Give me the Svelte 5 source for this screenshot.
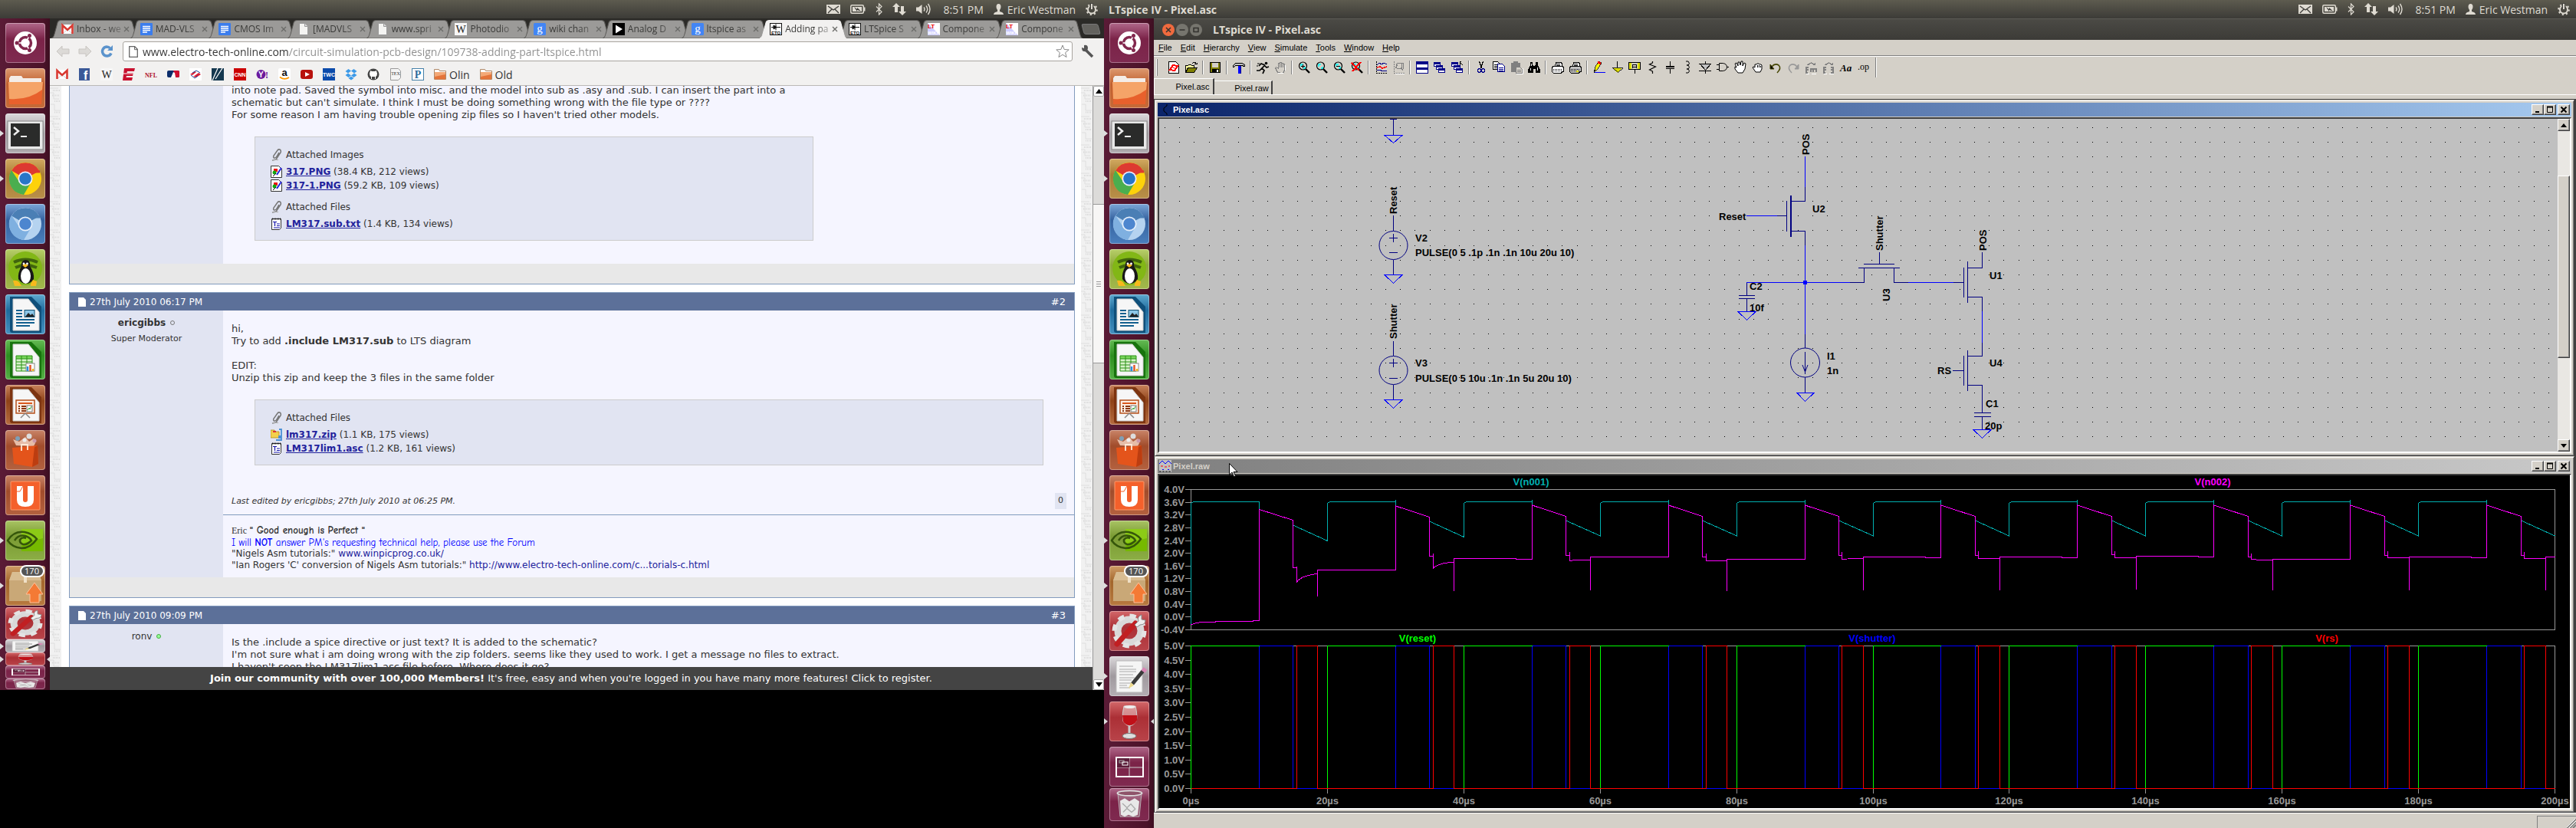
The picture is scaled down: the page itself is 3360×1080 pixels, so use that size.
<script lang="ts">
  const browserTabs = [
    { icon: 'gmail', title: 'Inbox - we' },
    { icon: 'gdoc', title: 'MAD-VLS' },
    { icon: 'gdoc', title: 'CMOS Im' },
    { icon: 'page', title: '[MADVLS' },
    { icon: 'page', title: 'www.spri' },
    { icon: 'wiki', title: 'Photodio' },
    { icon: 'google', title: 'wiki chan' },
    { icon: 'play', title: 'Analog D' },
    { icon: 'google', title: 'ltspice as' },
    { icon: 'eto', title: 'Adding pa', active: true },
    { icon: 'eto', title: 'LTSpice S' },
    { icon: 'ltwiki', title: 'Compone' },
    { icon: 'ltwiki', title: 'Compone' }
  ];

  const bookmarks = [
    ['gmail', 'Gmail'], ['facebook', 'Facebook'], ['wiki', 'Wikipedia'], ['espn', 'ESPN'], ['nfl', 'NFL'],
    ['mlb', 'MLB'], ['bank', 'Bank'], ['delta', 'Flights'], ['cnn', 'CNN'], ['yahoo', 'Yahoo'],
    ['amazon', 'Amazon'], ['youtube', 'YouTube'], ['twc', 'Weather'], ['dropbox', 'Dropbox'],
    ['github', 'GitHub'], ['tex', 'TeX'], ['pandora', 'Pandora']
  ];

  type Item = { icon: string; tone: string; pip?: string; badge?: string; fold?: string; back?: boolean };
  const common: Item[] = [
    { icon: 'ubuntu', tone: 'plum' },
    { icon: 'files', tone: 'orange' },
    { icon: 'terminal', tone: 'silver', pip: 'open' },
    { icon: 'chrome', tone: 'gold', pip: 'solid' },
    { icon: 'chromium', tone: 'blue' },
    { icon: 'tux', tone: 'lime' },
    { icon: 'writer', tone: 'azure' },
    { icon: 'calc', tone: 'green' },
    { icon: 'impress', tone: 'brown' },
    { icon: 'bag', tone: 'rust' },
    { icon: 'one', tone: 'rust' },
    { icon: 'nvidia', tone: 'moss', pip: 'open' },
    { icon: 'package', tone: 'tan', pip: 'solid', badge: '170' }
  ];
  const leftItems: Item[] = [
    ...common,
    { icon: 'settings', tone: 'red', fold: 'f1' },
    { icon: 'editor', tone: 'silver', fold: 'f2', pip: 'open' },
    { icon: 'wine', tone: 'red', fold: 'f2', pip: 'open', back: true },
    { icon: 'workspace', tone: 'plum', fold: 'f2' },
    { icon: 'trash', tone: 'plum', fold: 'f3' }
  ];
  const rightItems: Item[] = [
    ...common,
    { icon: 'settings', tone: 'red' },
    { icon: 'editor', tone: 'silver', pip: 'solid' },
    { icon: 'wine', tone: 'red', pip: 'solid', back: true },
    { icon: 'workspace', tone: 'plum', fold: 'f0' },
    { icon: 'trash', tone: 'plum', fold: 'f4' }
  ];

  const menus = ['File', 'Edit', 'Hierarchy', 'View', 'Simulate', 'Tools', 'Window', 'Help'];
  const toolGroups = [
    ['new', 'open'], ['save'], ['hammer'], ['run', 'halt'],
    ['zoomin', 'pan', 'zoomout', 'zoomfit'], ['autorange', 'pick'],
    ['tile', 'cascade', 'closeall'], ['cut', 'copy', 'paste', 'find'], ['setup', 'print'],
    ['wire', 'ground', 'label', 'resistor', 'cap', 'inductor', 'diode', 'gate', 'move', 'drag',
      'undo', 'redo', 'rotate', 'mirror', 'text', 'op']
  ];

  let gridDots = '';
  for (let r = 0; r < 22; r++)
    for (let c = 0; c < 95; c++)
      gridDots += `M${Math.round(1519 + c * 19.2)} ${Math.round(166 + r * 19.2)}h1v1h-1z`;

  const X0 = 1553.5;
  const tx = (t: number) => Math.round(X0 + t * 8.895 - 0.5) + 0.5;
  const cycles = [
    [664.5, 678.5, 740.5, 739, 759, 748.5, 778, 743.5, 743.5],
    [660, 674.5, 725.5, 722, 741, 733, 771, 728.5, 729.5],
    [659, 673.5, 724.5, 720, 731.5, 730, 770, 726.5, 726.5],
    [659, 673.5, 726.5, 722, 731.5, 731.5, 771, 729.5, 729.5],
    [659, 673.5, 724.5, 720, 729.5, 728.5, 770, 726.5, 727.5],
    [659, 673.5, 724.5, 719, 728.5, 728.5, 770, 726.5, 727.5],
    [659, 673.5, 723.5, 719, 727.5, 727.5, 769, 725.5, 726.5],
    [659, 673.5, 726.5, 722, 729.5, 730.5, 770, 729.5, 729.5],
    [659, 673.5, 724.5, 719, 727.5, 727.5, 770, 726.5, 727.5],
    [659, 673.5, 724.5, 720, 728.5, 728.5, 770, 726.5, 726.5]
  ];
  let n002 = `M${X0} 815L1557 813.5L1566 811.5H1585V810.5H1634V809.5H${tx(10)}`;
  let n001 = `M${X0} 815`;
  let reset = `M${X0} 1028.5`;
  let shutter = `M${X0} 1028.5`;
  let rs = `M${X0} 1028.5`;
  cycles.forEach((c, p) => {
    const t = 20 * p;
    const [top, end, drop, spike, low, tail, dip, f1, f2] = c;
    n002 += `V${top}L${tx(t + 15)} ${end}V${drop}H${tx(t + 15.5)}V${spike}V${low}Q${tx(t + 16.2)} ${tail + (low - tail) * 0.2} ${tx(t + 18.6)} ${tail}V${dip}V${f1}`;
    n002 += p < 9 ? `H${tx(t + 27.7)}V${f2}H${tx(t + 30)}` : `H${tx(200)}`;
    n001 += `V656.5L${tx(t) + 3} 654.5H${tx(t + 10)}${p ? 'V652' : ''}V${top}L${tx(t + 15)} ${end}V${p ? (p === 1 ? 680 : 679) : 685}L${tx(t + 20)} ${p ? (p === 1 ? 700.5 : 699) : 705.5}`;
    reset += `V842.5H${tx(t + 10)}V1028.5H${tx(t + 20)}`;
    shutter += `H${tx(t + 10)}V842.5H${tx(t + 15)}V1028.5`;
    rs += `H${tx(t + 15.5)}V842.5H${tx(t + 18.6)}V1028.5`;
  });
  shutter += `H${tx(200)}`;
  rs += `H${tx(200)}`;

  const upperTicks = Array.from({ length: 12 }, (_, i) => ({ y: 638.5 + Math.round(i * 16.64), label: (4 - i * 0.4).toFixed(1) + 'V' }));
  const lowerTicks = Array.from({ length: 11 }, (_, i) => ({ y: 842.5 + Math.round(i * 18.6), label: (5 - i * 0.5).toFixed(1) + 'V' }));
  const timeTicks = Array.from({ length: 11 }, (_, i) => ({ x: tx(i * 20), label: i * 20 + 'µs' }));
</script>

{#snippet favicon(kind: string)}
  <svg class="fav" viewBox="0 0 16 16" aria-hidden="true">
    {#if kind === 'gmail'}
      <rect y="2" width="16" height="12" fill="#fff" /><path d="M1.500 14V3l6.500 6 6.500-6v11" fill="none" stroke="#d93a32" stroke-width="2.600" /><path d="M3 13l4-4M13 13L9 9" stroke="#ccc" />
    {:else if kind === 'gdoc'}
      <rect width="16" height="16" rx="1" fill="#3b7ded" /><path d="M3 4.500h10M3 7h10M3 9.500h10M3 12h6" stroke="#fff" stroke-width="1.300" />
    {:else if kind === 'page'}
      <path d="M2.500.5h7l4 4v11h-11z" fill="#f4f4f2" stroke="#999" /><path d="M9.500.5v4h4" fill="#ddd" stroke="#999" />
    {:else if kind === 'wiki'}
      <rect width="16" height="16" fill="#f6f6f6" /><text x="8" y="13" class="serif" font-size="14" text-anchor="middle" fill="#222">W</text>
    {:else if kind === 'google'}
      <rect width="16" height="16" rx="1.500" fill="#4285f4" /><text x="8" y="12" class="serif" font-size="15" text-anchor="middle" fill="#fff">g</text>
    {:else if kind === 'play'}
      <rect width="16" height="16" fill="#000" /><path d="M4 2.500L13 8l-9 5.500z" fill="#fff" />
    {:else if kind === 'eto'}
      <rect x=".5" y=".5" width="15" height="15" fill="#fff" stroke="#111" /><path d="M2 5.500h12M8 1.500v8M5 3v5l4-2.500z" stroke="#111" fill="#111" /><text x="8" y="14.500" class="sans" font-size="6" font-weight="700" text-anchor="middle" fill="#111">ETO</text>
    {:else if kind === 'ltwiki'}
      <rect width="16" height="16" fill="#fff" /><path d="M0 0l16 16H0z" fill="#ccf" /><text x="0" y="7" class="sans" font-size="8" font-weight="700" fill="#e00">LT</text><text x="0" y="15" class="sans" font-size="6" font-weight="700" fill="#fff">WIKI</text>
    {:else if kind === 'facebook'}
      <rect x="1" width="14" height="16" fill="#3b5998" /><text x="7" y="15" class="sans" font-size="16" font-weight="700" fill="#fff">f</text>
    {:else if kind === 'espn'}
      <path d="M2 0h14l-1 4H6l-.500 2H14l-1 4H5l-.500 2H13l-1 4H0z" fill="#c8102e" /><path d="M1 7h13" stroke="#fff" stroke-width="1" />
    {:else if kind === 'nfl'}
      <text x="8" y="12" class="serif" font-size="8" font-weight="700" text-anchor="middle" fill="#b0122b">NFL</text>
    {:else if kind === 'mlb'}
      <rect y="3" width="16" height="9" rx="2" fill="#0b2d6b" /><path d="M8 3h6a2 2 0 012 2v5a2 2 0 01-2 2h-3z" fill="#cf1030" /><path d="M5 12l3-7 2 1 1 6z" fill="#fff" />
    {:else if kind === 'bank'}
      <rect width="16" height="16" fill="#fff" /><path d="M1 8l6-4 2 1-5 4zM5 11l7-5 3 2-6 4z" fill="#d71f36" /><path d="M4 6l5-3 5 3M2 9l5 4 4-3" stroke="#1f4ba0" fill="none" />
    {:else if kind === 'delta'}
      <rect width="16" height="16" fill="#15384f" /><path d="M8 0l-7 16M14 0L5 14" stroke="#fff" stroke-width="1.200" />
    {:else if kind === 'cnn'}
      <rect width="16" height="16" fill="#c00" /><text x="8" y="11" class="sans" font-size="7" font-weight="700" text-anchor="middle" fill="#fff">CNN</text>
    {:else if kind === 'yahoo'}
      <circle cx="6.500" cy="8" r="6" fill="#6b1a9e" /><text x="3" y="12" class="sans" font-size="10" font-weight="700" fill="#fff">Y</text><text x="12" y="13" class="serif" font-size="12" font-weight="700" fill="#6b1a9e">!</text>
    {:else if kind === 'amazon'}
      <rect width="16" height="16" rx="2" fill="#fff" /><text x="8" y="10" class="sans" font-size="13" font-weight="700" text-anchor="middle" fill="#111">a</text><path d="M2 11.500q6 4.500 12 .5" stroke="#f90" stroke-width="1.800" fill="none" />
    {:else if kind === 'youtube'}
      <rect y="2" width="16" height="12" rx="3" fill="#b8120d" /><path d="M6 5l6 3-6 3z" fill="#fff" />
    {:else if kind === 'twc'}
      <rect width="16" height="16" fill="#0b4bab" /><text x="8" y="11" class="sans" font-size="7" font-weight="700" text-anchor="middle" fill="#fff">TWC</text>
    {:else if kind === 'dropbox'}
      <path d="M4.500 1L8 3.500 4 6.500.5 4zM11.500 1L8 3.500l4 3L15.500 4zM.5 9L4 6.500l4 3L4.500 12zM15.500 9L12 6.500l-4 3 3.500 2.500zM8 10.500l3.500 2.500L8 15.500 4.500 13z" fill="#3d9ae8" />
    {:else if kind === 'github'}
      <circle cx="8" cy="8" r="7.500" fill="#444" /><path d="M5 14v-3q-2-1-2-4 0-1 .7-2L4 3l2 1h4l2-1 .3 2q.7 1 .7 2 0 3-2 4v3z" fill="#fff" /><path d="M6 14v-3h4v3z" fill="#444" />
    {:else if kind === 'tex'}
      <path d="M1.500.5h10l3 3v9l-3 3h-10z" fill="#f5f5f5" stroke="#999" /><text x="8" y="9" class="serif" font-size="6" text-anchor="middle" fill="#333">TEX</text>
    {:else if kind === 'pandora'}
      <rect x=".5" y=".5" width="15" height="15" fill="#fff" stroke="#4580a8" /><text x="8" y="13" class="serif" font-size="14" font-weight="700" text-anchor="middle" fill="#2d6c9c">P</text>
    {:else if kind === 'folder'}
      <path d="M.5 1.500h6l1 2h8v11H.5z" fill="#fff" stroke="#b08a6a" /><rect x="1" y="5" width="14" height="9.500" fill="#e4743a" /><path d="M1 5h14v3L1 11z" fill="#f3a876" />
    {/if}
  </svg>
{/snippet}

{#snippet glyph(kind: string)}
  <svg class="glyph" viewBox="0 0 52 52" preserveAspectRatio="none" aria-hidden="true">
    {#if kind === 'ubuntu'}
      <circle cx="26" cy="26" r="15" fill="#fff" /><circle cx="26" cy="26" r="7.500" fill="none" stroke="#82284e" stroke-width="3.500" />
      <path d="M26 26L12 26M26 26L33 14M26 26L33 38" stroke="#fff" stroke-width="1.600" />
      <circle cx="15" cy="26" r="2.500" fill="#82284e" /><circle cx="31.500" cy="16.500" r="2.500" fill="#82284e" /><circle cx="31.500" cy="35.500" r="2.500" fill="#82284e" />
    {:else if kind === 'files'}
      <path d="M5 13l2-3h14l2 3h24v6H5z" fill="#f4ede8" /><path d="M4 18h45l-2 29H5z" fill="#e8602c" /><path d="M4 18h45l-1 10Q30 42 5 40z" fill="#f5a468" />
    {:else if kind === 'terminal'}
      <rect x="3" y="10" width="46" height="37" fill="#e8e8e8" stroke="#888" /><rect x="7" y="13" width="38" height="30" fill="#2a2b2a" /><path d="M11 18l6 5-6 5" fill="none" stroke="#eee" stroke-width="2.500" /><path d="M20 30h8" stroke="#eee" stroke-width="2" />
    {:else if kind === 'chrome'}
      <circle cx="26" cy="26" r="21" fill="#fdd20a" /><path d="M26 26L8 15.500A21 21 0 0144.500 16z" fill="#dd3a31" /><path d="M8 15A21 21 0 0024 47L34 30 18 30z" fill="#4bae4f" /><path d="M26 17h19" stroke="#dd3a31" stroke-width="3" /><circle cx="26" cy="26" r="9.500" fill="#eef" /><circle cx="26" cy="26" r="7.800" fill="#2876c8" />
    {:else if kind === 'chromium'}
      <circle cx="26" cy="26" r="21" fill="#b5d3f0" /><path d="M26 26L8 15.500A21 21 0 0144.500 16z" fill="#4a7fb5" /><path d="M8 15A21 21 0 0024 47L34 30 18 30z" fill="#7fb0e0" /><path d="M26 17h19" stroke="#4a7fb5" stroke-width="3" /><circle cx="26" cy="26" r="9.500" fill="#e6f0fb" /><circle cx="26" cy="26" r="7.800" fill="#4d86cf" />
    {:else if kind === 'tux'}
      <circle cx="26" cy="25" r="22" fill="#82b716" /><path d="M11 17q15-7 31 0M13 24q13-6 28 0" stroke="#40640d" stroke-width="4" fill="none" /><path d="M21 22q-1-7 5-8 7 0 6 8 6 9 5 17-4 6-10 6t-10-6q-1-8 4-17z" fill="#181818" /><ellipse cx="26.500" cy="35" rx="6.500" ry="10" fill="#fff" /><path d="M22 21l4-2 4 2-4 3zM10 41q5-1 8 2l3 5-9 0zM33 45l3-5 5 2-1 6h-7z" fill="#f7b91c" /><circle cx="24" cy="19" r="1.400" fill="#fff" /><circle cx="28.500" cy="19" r="1.400" fill="#fff" />
    {:else if kind === 'writer' || kind === 'calc' || kind === 'impress'}
      <path class="doc-{kind}" d="M6 3h28l13 13v34H9q-3 0-3-3z" /><path d="M10 6h20l14 17v24H10z" fill="#f6f6f6" stroke="#ccc" />
      {#if kind === 'writer'}
        <path d="M14 21h8M14 25h8M14 29h8M14 33h24M14 37h24M14 41h18" stroke="#14608f" stroke-width="1.800" /><rect x="25" y="20.500" width="13" height="9" fill="#8cc7e8" stroke="#14506f" /><path d="M26 29l4-5 3 3 2-2 3 4z" fill="#222" />
      {:else if kind === 'calc'}
        <rect x="14" y="21" width="21" height="20" fill="#d6f3c8" /><rect x="14" y="21" width="21" height="4" fill="#7ad55b" /><path d="M14 21h21v20H14zM14 25h21M14 29h21M14 33h21M14 37h21M21 21v20M28 21v20" fill="none" stroke="#2a9116" /><rect x="27" y="31" width="11" height="10" fill="#fff" stroke="#888" /><path d="M29 35v6" stroke="#2d8edb" stroke-width="2.500" /><path d="M32.500 33v8" stroke="#e2572b" stroke-width="2.500" /><path d="M36 38v3" stroke="#f2b61c" stroke-width="2.500" />
      {:else}
        <rect x="14" y="20" width="24" height="17" fill="#fdeee4" stroke="#b4501c" stroke-width="1.500" /><path d="M17 24h18" stroke="#d9581e" stroke-width="2" /><path d="M17 28h2M17 31h2M17 34h2M21 28h6M21 31h6M21 34h6" stroke="#8a3510" stroke-width="2" /><rect x="28" y="27" width="7" height="8" fill="#fff" stroke="#777" /><path d="M29 33l2-3 1 2 2-4" stroke="#37a537" fill="none" /><path d="M26 37l-6 6M26 37l6 6" stroke="#888" stroke-width="1.500" />
      {/if}
    {:else if kind === 'bag'}
      <path d="M14 20L10 12l8 3 8-6 5 6 6-4 2 6-2 4z" fill="#f5d7c5" opacity=".8" /><circle cx="16" cy="11" r="3" fill="#7f9fb5" /><circle cx="31" cy="8" r="3.500" fill="#ddd" /><circle cx="38" cy="14" r="2.500" fill="#c9a" /><circle cx="25" cy="13" r="2.500" fill="#eee" /><path d="M9 23l33-3 1 24-8 4-24-4z" fill="#e4541b" /><path d="M35 48l8-4-1-24-4 2z" fill="#bc3d10" /><path d="M21 27v-8h8v7" stroke="#ffe9d8" stroke-width="1.800" fill="none" />
    {:else if kind === 'one'}
      <rect x="7" y="8" width="38" height="37" rx="1" fill="#f4602b" stroke="#ff9a6a" /><path d="M15 14h8v18q0 3 3 3t3-3V14h8v18q0 9-11 9T15 32z" fill="#fff" /><path d="M23 14l-4 7h-4" fill="none" stroke="#f4602b" />
    {:else if kind === 'nvidia'}
      <path d="M21 11h28v29H21z" fill="#76b900" /><path d="M21 11h28v12L21 30z" fill="#95d320" opacity=".7" /><path d="M3 26q8-13 22-11 10 2 16 9-8 12-20 12Q9 35 3 26z" fill="none" stroke="#35560a" stroke-width="2.500" /><path d="M12 26q5-8 14-6 6 2 8 6-6 6-11 5-5-2-4-6 3-4 8-2" fill="none" stroke="#35560a" stroke-width="2.500" />
    {:else if kind === 'package'}
      <path d="M5 19l4-11h34l4 11v27H5z" fill="#c9a877" /><path d="M5 19l4-11h34l4 11z" fill="#d9bd92" /><path d="M26 8v14" stroke="#efe0c6" stroke-width="4" /><path d="M38 22l11 15h-5v11H32V37h-5z" fill="#f47a35" stroke="#ffc09a" />
    {:else if kind === 'settings'}
      <circle cx="26" cy="26" r="15" fill="none" stroke="#d9d9d9" stroke-width="9" /><circle cx="26" cy="26" r="19.500" fill="none" stroke="#e4e4e4" stroke-width="6" stroke-dasharray="8 7.300" /><path d="M10 43L34 16" stroke="#c11f22" stroke-width="7" stroke-linecap="round" /><path d="M33 18l5-5q-2-6 4-8l0 6 5 1q0 6-7 6l-4 3z" fill="#eee" stroke="#888" />
    {:else if kind === 'editor'}
      <path d="M9 6h34v41H9z" fill="#f5f5f5" stroke="#bbb" /><path d="M13 13h18M13 17h22M13 20h22M13 24h18M13 28h20M13 31h16M13 35h15M13 38h10M13 41h14" stroke="#aaa" /><path d="M44 19L30 36" stroke="#3a3a3a" stroke-width="5" /><path d="M47 16l-3 4" stroke="#d987b6" stroke-width="6" /><path d="M28 34l4 4-7 4z" fill="#ecd98b" />
    {:else if kind === 'wine'}
      <path d="M19 6h15q3 12 1 20-4 6-8.500 6T18 26Q16 16 19 6z" fill="#f3dede" fill-opacity=".5" stroke="#ccc" /><path d="M17 18h19v7q-4 6-9.500 6T18 26z" fill="#c01018" /><path d="M26 32v11" stroke="#ccc" stroke-width="3" /><ellipse cx="26" cy="45" rx="9" ry="3.500" fill="#ddd" stroke="#777" /><ellipse cx="26.500" cy="7" rx="7.500" ry="2" fill="#eee" />
    {:else if kind === 'workspace'}
      <rect x="9" y="14" width="35" height="25" fill="none" stroke="#fff" stroke-width="2" /><path d="M26 15v23M10 27h33" stroke="#ccc" /><rect x="10" y="15" width="16" height="12" fill="#5b1c39" /><rect x="13" y="18" width="6" height="3" fill="none" stroke="#aaa" /><rect x="17" y="20" width="7" height="4" fill="none" stroke="#fff" />
    {:else if kind === 'trash'}
      <path d="M11 8h31l-3 37H14z" fill="#c9b5be" fill-opacity=".35" stroke="#bbb" /><path d="M14 20l6-4 6 5 7-5 6 5-2 21-6 3-6-3-5 3-5-3z" fill="#e8e8e8" /><path d="M17 24l6 7 5-6 6 8M18 38l5-6 6 6 5-5" stroke="#a9a9a9" stroke-width="1.500" fill="none" /><ellipse cx="26.500" cy="8" rx="16" ry="4" fill="#8e5369" stroke="#ddd" stroke-width="2" />
    {/if}
  </svg>
{/snippet}

{#snippet launcher(items: Item[])}
  <nav class="launcher" aria-label="Launcher">
    {#each items as it}
      <button class="app {it.tone} {it.fold ?? ''}" aria-label={it.icon}>
        {@render glyph(it.icon)}
        {#if it.pip}<span class="pip {it.pip}"></span>{/if}
        {#if it.back}<span class="pip-back"></span>{/if}
        {#if it.badge}<span class="badge">{it.badge}</span>{/if}
      </button>
    {/each}
  </nav>
{/snippet}

{#snippet tray()}
  <div class="tray">
    <svg width="18" height="14" viewBox="0 0 18 14" aria-hidden="true"><rect y="1" width="18" height="12" fill="#dfdbd2" /><path d="M2 3l7 5 7-5M2 12l5-5M16 12l-5-5" stroke="#3c3b37" fill="none" stroke-width="1.300" /></svg>
    <svg width="20" height="12" viewBox="0 0 20 12" aria-hidden="true"><rect x=".8" y=".8" width="16.500" height="10.400" rx="1.500" fill="none" stroke="#dfdbd2" stroke-width="1.500" /><rect x="3" y="3" width="12" height="6" fill="#dfdbd2" /><path d="M18.500 3.500v5" stroke="#dfdbd2" stroke-width="2" /><path d="M5 3l4 3v-2l5 4.500-5-1.500v2z" fill="#3c3b37" /></svg>
    <svg width="9" height="16" viewBox="0 0 9 16" aria-hidden="true"><path d="M1 4.500l7 7L4.500 15V1L8 4.500l-7 7" fill="none" stroke="#dfdbd2" stroke-width="1.200" /></svg>
    <svg width="18" height="16" viewBox="0 0 18 16" aria-hidden="true"><path d="M5 0l5 5H7v7H3V5H0zM13 16l5-5h-3V4h-4v7H8z" fill="#dfdbd2" /></svg>
    <svg width="19" height="16" viewBox="0 0 19 16" aria-hidden="true"><path d="M0 5.500h3L7.500 2v12L3 10.500H0z" fill="#dfdbd2" /><path d="M10 5.500q2 2.500 0 5M13 3.500q3.500 4.500 0 9M15.500 1q5 7 0 14" fill="none" stroke="#dfdbd2" stroke-width="1.400" /></svg>
    <span class="clock">8:51 PM</span>
    <span class="user">
      <svg width="13" height="14" viewBox="0 0 13 14" aria-hidden="true"><path d="M3.500 4q0-4 3-4t3 4q0 2-1.500 4v2q5 1 5 4H0q0-3 5-4V8Q3.500 6 3.500 4z" fill="#dfdbd2" /></svg>
      Eric Westman
    </span>
    <svg width="16" height="16" viewBox="0 0 16 16" aria-hidden="true"><circle cx="8" cy="8.500" r="5" fill="none" stroke="#dfdbd2" stroke-width="2" /><circle cx="8" cy="8.500" r="6.800" fill="none" stroke="#dfdbd2" stroke-width="2" stroke-dasharray="2.200 3.140" /><rect x="5.500" width="5" height="8" fill="#45443e" /><path d="M8 1v7" stroke="#dfdbd2" stroke-width="2" /></svg>
  </div>
{/snippet}

{#snippet clip()}
  <svg class="mini" viewBox="0 0 16 16" aria-hidden="true"><path d="M2 15l5-1 6-9q1-3-1-4-2-.5-3 1L4 9q-1 3 1 3t3-2l3-5" fill="none" stroke="#777" stroke-width="1.500" /><path d="M2 14.500h8" stroke="#aaa" /></svg>
{/snippet}
{#snippet fileicon(kind: string)}
  <svg class="mini" viewBox="0 0 16 16" aria-hidden="true">
    {#if kind === 'img'}
      <path d="M.5.5h10l4 4v11H.5z" fill="#fff" stroke="#333" /><path d="M4 4h5v4H4z" fill="#e11" /><circle cx="5" cy="9" r="2.500" fill="#1a1" /><path d="M14 3l-6 9" stroke="#22d" stroke-width="2" /><path d="M3 14l4-4" stroke="#111" />
    {:else if kind === 'txt'}
      <path d="M1.500 1.500h12v12l-2 2h-10z" fill="#fff" stroke="#333" /><path d="M2 1.500h11" stroke="#111" stroke-width="2" stroke-dasharray="1 1" /><path d="M3 5.500h5M5.500 5v6M8 8h4M8 10.500h4M4 13h8" stroke="#11a" stroke-width="1.200" />
    {:else}
      <path d="M0 2h5l1 2h5v8H0z" fill="#f4d04b" stroke="#b48a12" stroke-width=".8" /><rect x="3" y="3" width="4" height="2" fill="#d33" /><path d="M11 1h3v9h-3v2h3v3H7" fill="none" stroke="#4a8fd6" stroke-width="1.800" />
    {/if}
  </svg>
{/snippet}
{#snippet postDate(text: string, n: string)}
  <header class="post-head">
    <span class="date"><svg width="10" height="12" viewBox="0 0 10 12" aria-hidden="true"><path d="M0 0h7l3 3v9H0z" fill="#fff" /></svg>{text}</span>
    {#if n}<a href="#post">{n}</a>{/if}
  </header>
{/snippet}

{#snippet circuitStrip(id: string)}
  <svg class="strip" aria-hidden="true">
    <defs>
      <pattern {id} width="15" height="37" patternUnits="userSpaceOnUse">
        <path d="M0 3h11M0 9h5v8h7M1 24h5v8h8" stroke="#dedede" fill="none" /><path d="M4 6h9M3 12.500h9M6 20h7M6 34.500h8" stroke="#d9d9d9" stroke-width="2" stroke-dasharray="1 1" />
      </pattern>
    </defs>
    <rect width="15" height="100%" fill="url(#{id})" />
  </svg>
{/snippet}

{#snippet tool(kind: string)}
  <svg class="tool-icon" viewBox="0 0 16 16" shape-rendering="crispEdges" aria-hidden="true">
    {#if kind === 'new'}
      <path d="M1.500.5h9l4 4v11h-13z" fill="#fff" stroke="#000" /><path d="M3 11L7 5l6 1-4 6z" fill="none" stroke="#f00" stroke-width="2" /><path d="M5 7l6 3" stroke="#f00" />
    {:else if kind === 'open'}
      <path d="M.5 14.500v-9h3l1-1h3l1 1h3v3" fill="#ffff9c" stroke="#000" /><path d="M.5 14.500l3-6h12l-4 6z" fill="#808000" stroke="#000" /><path d="M9 2.500l2-1h2l1 2m-2 0h3v-2" fill="none" stroke="#000" />
    {:else if kind === 'save'}
      <rect x="1.500" y="1.500" width="13" height="13" fill="#808000" stroke="#000" /><rect x="4" y="2" width="8" height="6" fill="#d4d0c8" /><rect x="4" y="10" width="9" height="4" fill="#000" /><rect x="10" y="11" width="2" height="3" fill="#fff" />
    {:else if kind === 'hammer'}
      <path d="M.5 5.500l3-3h9l3 2v2l-4-1H4l-3 2z" fill="#c0c0c0" stroke="#000" /><path d="M8 6v10" stroke="#00f" stroke-width="3" /><path d="M10 6v10" stroke="#008" />
    {:else if kind === 'run'}
      <g shape-rendering="auto"><circle cx="12.500" cy="2.500" r="1.800" /><path d="M11 5l-4 4 3 3-2 4M7 9l-3 3H0M11 5L6 3 3 6M11 6l2 2 3-1" fill="none" stroke="#000" stroke-width="1.700" /><path d="M1 3h3M0 6h2" stroke="#000" /></g>
    {:else if kind === 'halt'}
      <path d="M4.500 14.500l-3-6 1-1 3 2v-7h2v-1h2v1h2v1h2v8l-2 4z" fill="#d4d0c8" stroke="#808080" /><path d="M7.500 3v5M9.500 3v5M11.500 4v4" stroke="#808080" /><path d="M5 15.500h7M14.500 5v7" stroke="#fff" />
    {:else if kind === 'zoomin' || kind === 'zoomout' || kind === 'pan' || kind === 'zoomfit'}
      <g shape-rendering="auto"><circle cx="6.500" cy="6" r="5" fill="#d4d0c8" stroke="#000" stroke-width="1.200" /><path d="M4 7V4h3M9 7v2H7" fill="none" stroke="#0ff" stroke-width="1.500" /><path d="M10 10l5 5" stroke="#000" stroke-width="2.400" /></g>
      {#if kind === 'zoomin' || kind === 'zoomout'}<path d="M4 6.500h5" stroke="#000" />{/if}
      {#if kind === 'zoomin'}<path d="M6.500 4v5" stroke="#000" />{/if}
      {#if kind === 'zoomfit'}<path d="M1 2l10 10M13 1L2 13" stroke="#f00" stroke-width="2" />{/if}
    {:else if kind === 'autorange'}
      <path d="M2.500 0v15.500h14" fill="none" stroke="#000" stroke-dasharray="2 1" /><path d="M3 5l3-3 3 2 3-2 4 2" fill="none" stroke="#008" /><path d="M3 8l4-1 3 2 6-2" fill="none" stroke="#f00" stroke-width="1.500" /><path d="M3 11h5l1 2 7-1" fill="none" stroke="#008" />
    {:else if kind === 'pick'}
      <path d="M2.500 0v15.500h14" fill="none" stroke="#808080" stroke-dasharray="2 1" /><circle cx="9" cy="6" r="4" fill="none" stroke="#808080" /><path d="M4 9l3-5M11 8l3 4M6 2h8v8" fill="none" stroke="#808080" /><path d="M4 16.500h12" stroke="#fff" />
    {:else if kind === 'tile'}
      <rect x=".5" y=".5" width="15" height="15" fill="#fff" stroke="#008" /><path d="M0 2h16M0 9.500h16" stroke="#008" stroke-width="3" />
    {:else if kind === 'cascade' || kind === 'closeall'}
      <rect x=".5" y="1.500" width="8" height="5" fill="#fff" stroke="#008" /><path d="M0 2.500h9" stroke="#008" stroke-width="2" /><rect x="3.500" y="5.500" width="8" height="5" fill="#fff" stroke="#008" /><path d="M3 6.500h9" stroke="#008" stroke-width="2" /><rect x="6.500" y="9.500" width="8" height="5" fill="#fff" stroke="#008" /><path d="M6 10.500h9" stroke="#008" stroke-width="2" />
      {#if kind === 'closeall'}<path d="M11 1l4 4M12.500 .5h-1v4" stroke="#000" fill="none" />{/if}
    {:else if kind === 'cut'}
      <path d="M5.500 0l3 9M10.500 0l-3 9" stroke="#000" /><circle cx="5.500" cy="12" r="2.300" fill="none" stroke="#008" /><circle cx="10.500" cy="12" r="2.300" fill="none" stroke="#008" />
    {:else if kind === 'copy'}
      <path d="M.5.5h6l2 2v8h-8z" fill="#fff" stroke="#000" /><path d="M2 4h4M2 6h4M2 8h4" stroke="#000" /><path d="M6.500 3.500h6l3 3v7h-9z" fill="#fff" stroke="#008" /><path d="M8 8h6M8 10h6M8 12h6" stroke="#008" />
    {:else if kind === 'paste'}
      <rect x="1" y="2" width="12" height="12" rx="1" fill="#808080" /><rect x="4" y="0" width="6" height="3" fill="#808080" /><path d="M7.500 7.500h5l3 3v5h-8z" fill="#d4d0c8" stroke="#808080" /><path d="M9 11h5M9 13h5" stroke="#808080" /><path d="M16 9v7H8" stroke="#fff" fill="none" />
    {:else if kind === 'find'}
      <path d="M3 1h3v4h1V6h2V5h1V1h3v4l3 6v4h-6v-5H7v5H0v-4l3-6z" fill="#000" /><path d="M4 3v3M3 9v3M12 8v4" stroke="#fff" />
    {:else if kind === 'setup' || kind === 'print'}
      <path d="M4.500 6.500l1-5h7l1 2v3" fill="#fff" stroke="#000" /><path d="M6 3h5M6 5h5" stroke="#000" /><path d="M.5 7.500l2-1h12l1 2v5h-2l-1 2h-10l-2-2z" fill={kind === 'setup' ? '#fff' : '#c0c0c0'} stroke="#000" /><path d="M2 10h11M2 12h11" stroke="#000" stroke-dasharray="1 1" />
      {#if kind === 'print'}<path d="M9 12.500h3" stroke="#dd0" stroke-width="2" />{/if}
    {:else if kind === 'wire'}
      <path d="M2 13V9l5-9 4 2-6 9z" fill="#ff0" stroke="#000" stroke-width=".8" /><path d="M6 1l4 2" stroke="#f00" stroke-width="3" /><path d="M1 11v4" stroke="#000" /><path d="M2 14h14" stroke="#00f" />
    {:else if kind === 'ground'}
      <path d="M8.500 0v8" stroke="#000" /><path d="M1.500 8.500h14l-7 6z" fill="#dd0" stroke="#000" stroke-width=".8" />
    {:else if kind === 'label'}
      <rect x=".5" y="1.500" width="15" height="9" fill="#dd0" stroke="#000" /><rect x="4" y="2" width="8" height="8" fill="#d4d0c8" /><path d="M5.500 9V4.500h5V9M5.500 7h5M8 11v5" stroke="#000" fill="none" />
    {:else if kind === 'resistor'}
      <path d="M8.500 0v2l-4 2 8 3-8 4 4 2v3" fill="none" stroke="#000" stroke-width="1.200" shape-rendering="auto" />
    {:else if kind === 'cap'}
      <path d="M8.500 0v7M8.500 9v7M3 7h11M3 9.500h11" stroke="#000" stroke-width="1.200" />
    {:else if kind === 'inductor'}
      <path d="M6 0h3q3 3 0 5H7h2q3 3 0 5H7h2q3 3 0 5H6" fill="none" stroke="#000" shape-rendering="auto" />
    {:else if kind === 'diode'}
      <path d="M8.500 0v16M0 3.500h16M0 12.500h16" stroke="#000" /><path d="M1.500 3.500h14l-7 8z" fill="#c0c0c0" stroke="#000" />
    {:else if kind === 'gate'}
      <path d="M0 4.500h3M0 10.500h3M13 7.500h3" stroke="#000" /><path d="M3.500 2.500h5q5 1 5 5t-5 5h-5z" fill="#d4d0c8" stroke="#000" shape-rendering="auto" />
    {:else if kind === 'move'}
      <path d="M5 15l-4-5V7l2 1-2-5 2-1 2 4V1h2l1 4 1-5h2v6l2-4 2 1-1 7-3 5z" fill="#fff" stroke="#000" shape-rendering="auto" />
    {:else if kind === 'drag'}
      <path d="M5 14l-4-6 1-1 2 1V4h2l1-1h2l1 1h2l1 1v5l-2 4z" fill="#fff" stroke="#000" shape-rendering="auto" /><path d="M7 5v3M9 5v3M11 6v2" stroke="#000" />
    {:else if kind === 'undo' || kind === 'redo'}
      <g shape-rendering="auto" class={kind}><path d="M3 7q4-5 9-2 4 4-2 10" fill="none" stroke-width="1.500" /><path d="M1 4v6h5z" /></g>
    {:else if kind === 'rotate' || kind === 'mirror'}
      <path d="M4 15H2V8h3M2 11h3M4 5q4-5 8-1l1 1" fill="none" stroke="#808080" stroke-width="1.500" /><path d="M10 5h4V1z" fill="#808080" />
      {#if kind === 'rotate'}<path d="M8 14v-4h7v4M11 10v4" fill="none" stroke="#808080" stroke-width="1.500" />{:else}<path d="M11 8h3v7h-3M11 11h3" fill="none" stroke="#808080" stroke-width="1.500" />{/if}
      <path d="M2 16h4M9 16h6" stroke="#fff" />
    {:else if kind === 'text'}
      <text x="0" y="13" class="serif" font-size="13" font-weight="700" font-style="italic">Aa</text>
    {:else if kind === 'op'}
      <text x="0" y="11" class="serif" font-size="12">.op</text>
    {/if}
  </svg>
{/snippet}

{#snippet childTitle(name: string, active: boolean)}
  <header class="child-title" class:active>
    {#if active}
      <svg width="16" height="16" viewBox="0 0 16 16" aria-hidden="true"><path d="M10 1v2l-4 3v4l4 3v2" fill="none" stroke="#000" /></svg>
    {:else}
      <svg width="16" height="16" viewBox="0 0 16 16" aria-hidden="true"><rect width="16" height="16" fill="#c0c0c0" /><path d="M0 5l4-4 4 4 4-4 4 4" stroke="#00f" fill="none" /><path d="M2 8h3M7 9h3M12 8h2" stroke="#f00" /><path d="M4 12.500h2M11 12.500h2" stroke="#00f" /><path d="M0 15h16" stroke="#000" stroke-dasharray="3 1" /></svg>
    {/if}
    <h2>{name}</h2>
    <div class="child-buttons">
      <button aria-label="Minimize"><svg width="10" height="10" viewBox="0 0 10 10"><path d="M2 8h5" stroke="#000" stroke-width="2" /></svg></button>
      <button aria-label="Maximize"><svg width="10" height="10" viewBox="0 0 10 10"><path d="M1.500 2v6.500h7V2" fill="none" stroke="#000" /><path d="M1 1.500h8" stroke="#000" stroke-width="2" /></svg></button>
      <button class="x" aria-label="Close"><svg width="10" height="10" viewBox="0 0 10 10"><path d="M1.500 1.500l7 7M8.500 1.500l-7 7" stroke="#000" stroke-width="2" /></svg></button>
    </div>
    {#if !active}
      <svg class="cursor" width="12" height="19" viewBox="0 0 12 19" aria-hidden="true"><path d="M.5.5v15l3.500-3.500 2.500 6 2-1-2.500-5.500h5z" fill="#fff" stroke="#000" /></svg>
    {/if}
  </header>
{/snippet}

<main class="desktop">
  <section class="display left">
    <div class="panel">{@render tray()}</div>
    <div class="workspace">
      {@render launcher(leftItems)}
      <div class="browser">
        <div class="tab-row">
          <div class="tabs" role="tablist">
            {#each browserTabs as t}
              <div class="tab" class:active={t.active}>
                <svg class="tab-shape" viewBox="0 0 110 24" preserveAspectRatio="none" aria-hidden="true"><path d="M0 24Q3 23 4 18L8 3Q9 .5 12 .5H99Q102 .5 103 3L107 18Q108 23 110 24z" /></svg>
                {@render favicon(t.icon)}
                <button class="tab-title" role="tab" aria-selected={t.active ? 'true' : 'false'}>{t.title}</button>
                <button class="tab-close" aria-label="Close tab"><svg width="8" height="8" viewBox="0 0 8 8"><path d="M1 1l6 6M7 1L1 7" stroke="#6a6a68" stroke-width="1.300" /></svg></button>
              </div>
            {/each}
          </div>
          <button class="new-tab" aria-label="New tab"></button>
        </div>
        <div class="address-row">
          <button class="nav" aria-label="Back"><svg width="18" height="16" viewBox="0 0 18 16"><path d="M8 1v4h9v6H8v4L1 8z" fill="#dcdad7" stroke="#c8c5c1" /></svg></button>
          <button class="nav" aria-label="Forward"><svg width="18" height="16" viewBox="0 0 18 16"><path d="M10 1v4H1v6h9v4l7-7z" fill="#dcdad7" stroke="#c8c5c1" /></svg></button>
          <button class="nav" aria-label="Reload"><svg width="18" height="18" viewBox="0 0 18 18"><path d="M14 11.500A6 6 0 118 3q3 0 4.500 2" fill="none" stroke="#5b93cc" stroke-width="3.500" /><path d="M16 1v7H9z" fill="#5b93cc" /></svg></button>
          <label class="omnibox">
            <svg width="12" height="15" viewBox="0 0 12 15" aria-hidden="true"><path d="M.7.700h7l3.600 3.600v10H.7z" fill="#fff" stroke="#666" stroke-width="1.300" /><path d="M7.500.7v4h4" fill="none" stroke="#666" /></svg>
            <input aria-label="Address" value="www.electro-tech-online.com/circuit-simulation-pcb-design/109738-adding-part-ltspice.html" />
            <svg width="18" height="18" viewBox="0 0 18 18" aria-hidden="true"><path d="M9 1l2.200 5.500 6 .4-4.600 3.800 1.500 5.800L9 13.300l-5.100 3.200 1.500-5.800L.8 6.900l6-.4z" fill="#fff" stroke="#888" /></svg>
          </label>
          <button class="nav" aria-label="Settings"><svg width="18" height="18" viewBox="0 0 18 18"><path d="M5 6l10 10" stroke="#555" stroke-width="3.500" /><path d="M1 4l3 1V1q5-1 5 4-1 5-5 4-3 0-3-5z" fill="#555" /></svg></button>
        </div>
        <nav class="bookmarks">
          {#each bookmarks as [icon, name]}
            <a href="#{icon}" aria-label={name}>{@render favicon(icon)}</a>
          {/each}
          <button>{@render favicon('folder')}Olin</button>
          <button>{@render favicon('folder')}Old</button>
        </nav>
        <div class="viewport">
          <div class="page">
            <div class="thread">
              {@render circuitStrip('circuit-a')}
              <div class="posts">
                <article class="post first">
                  <div class="post-main">
                    <aside></aside>
                    <div class="content">
                      <p>into note pad. Saved the symbol into misc. and the model into sub as .asy and .sub. I can insert the part into a<br />schematic but can't simulate. I think I must be doing something wrong with the file type or ????<br />For some reason I am having trouble opening zip files so I haven't tried other models.</p>
                      <div class="attach narrow">
                        <h4>{@render clip()}Attached Images</h4>
                        <ul>
                          <li>{@render fileicon('img')}<a href="#317">317.PNG</a> (38.4 KB, 212 views)</li>
                          <li>{@render fileicon('img')}<a href="#317-1">317-1.PNG</a> (59.2 KB, 109 views)</li>
                        </ul>
                        <h4>{@render clip()}Attached Files</h4>
                        <ul><li>{@render fileicon('txt')}<a href="#sub">LM317.sub.txt</a> (1.4 KB, 134 views)</li></ul>
                      </div>
                    </div>
                  </div>
                  <footer></footer>
                </article>
                <article class="post">
                  {@render postDate('27th July 2010 06:17 PM', '#2')}
                  <div class="post-main">
                    <aside>
                      <div class="author"><b>ericgibbs</b><span class="status off"></span></div>
                      <div class="rank">Super Moderator</div>
                    </aside>
                    <div class="content">
                      <p>hi,<br />Try to add <b>.include LM317.sub</b> to LTS diagram<br /><br />EDIT:<br />Unzip this zip and keep the 3 files in the same folder</p>
                      <div class="attach">
                        <h4>{@render clip()}Attached Files</h4>
                        <ul>
                          <li>{@render fileicon('zip')}<a href="#zip">lm317.zip</a> (1.1 KB, 175 views)</li>
                          <li>{@render fileicon('txt')}<a href="#asc">LM317lim1.asc</a> (1.2 KB, 161 views)</li>
                        </ul>
                      </div>
                      <div class="edited"><em>Last edited by ericgibbs; 27th July 2010 at 06:25 PM.</em><span class="rep">0</span></div>
                      <div class="signature">
                        <div><span class="eric">Eric</span> <b class="hand">" Good enough is Perfect "</b></div>
                        <div class="hand notice">I will <b>NOT</b> answer PM's requesting technical help, please use the Forum</div>
                        <div>"Nigels Asm tutorials:" <a href="#winpic">www.winpicprog.co.uk/</a></div>
                        <div>"Ian Rogers 'C' conversion of Nigels Asm tutorials:" <a href="#tutorials">http://www.electro-tech-online.com/c...torials-c.html</a></div>
                      </div>
                    </div>
                  </div>
                  <footer></footer>
                </article>
                <article class="post">
                  {@render postDate('27th July 2010 09:09 PM', '#3')}
                  <div class="post-main">
                    <aside><div class="author">ronv<span class="status on"></span></div></aside>
                    <div class="content">
                      <p>Is the .include a spice directive or just text? It is added to the schematic?<br />I'm not sure what i am doing wrong with the zip folders. seems like they used to work. I get a message no files to extract.<br />I haven't seen the LM317lim1.asc file before. Where does it go?</p>
                    </div>
                  </div>
                </article>
              </div>
              {@render circuitStrip('circuit-b')}
            </div>
            <a class="join" href="#register"><b>Join our community with over 100,000 Members!</b>&nbsp;It's free, easy and when you're logged in you have many more features! Click to register.</a>
          </div>
          <div class="web-scroll">
            <button aria-label="Scroll up"><svg width="9" height="6" viewBox="0 0 9 6"><path d="M4.500 0L9 6H0z" /></svg></button>
            <div class="web-track"><div class="web-thumb"><i></i><i></i><i></i></div></div>
            <button aria-label="Scroll down"><svg width="9" height="6" viewBox="0 0 9 6"><path d="M4.500 6L9 0H0z" /></svg></button>
          </div>
        </div>
      </div>
    </div>
  </section>

  <section class="display right">
    <div class="panel"><strong>LTspice IV - Pixel.asc</strong>{@render tray()}</div>
    <div class="workspace">
      {@render launcher(rightItems)}
      <div class="ltspice">
        <header class="titlebar">
          <button class="wb close" aria-label="Close"><svg viewBox="0 0 16 16"><path d="M5 5l6 6M11 5l-6 6" /></svg></button>
          <button class="wb" aria-label="Minimize"><svg viewBox="0 0 16 16"><path d="M4.500 8h7" /></svg></button>
          <button class="wb" aria-label="Maximize"><svg viewBox="0 0 16 16"><path d="M5 5.500h6v5H5z" /></svg></button>
          <h1>LTspice IV - Pixel.asc</h1>
        </header>
        <nav class="menubar">
          {#each menus as m}<button><u>{m[0]}</u>{m.slice(1)}</button>{/each}
        </nav>
        <div class="toolbar">
          {#each toolGroups as g}
            <div class="group">
              {#each g as k}<button aria-label={k}>{@render tool(k)}</button>{/each}
            </div>
          {/each}
        </div>
        <div class="doc-tabs" role="tablist">
          <button class="current" role="tab" aria-selected="true">Pixel.asc</button>
          <button role="tab" aria-selected="false">Pixel.raw</button>
        </div>
        <div class="mdi">
          <section class="child">
            {@render childTitle('Pixel.asc', true)}
            <div class="child-body">
              <svg class="canvas schematic" viewBox="1512 155 1824 434" preserveAspectRatio="xMinYMin slice" role="img" aria-label="Pixel schematic">
                <path d={gridDots} fill="#000" shape-rendering="crispEdges" />
                <g class="part" shape-rendering="crispEdges">
                  <path d="M1813 155.500h9M1817.500 155V176.500M1817.500 281V301M1812 310.500h11M1817.500 305v11M1812 329.500h11M1817.500 339v19M1817.500 445v19M1812 473.500h11M1817.500 468v11M1812 493.500h11M1817.500 502v19" />
                  <path d="M2354.500 243v19.500H2337M2330.500 262v40M2318 281.500h12M2337 301.500h17.500V320M2278.500 368v17M2268 385.500h21M2268 389.500h21M2278.500 390v16M2354.500 435v19M2354.500 459v29M2354.500 492v20" />
                  <path d="M2413 368.500h18.500V350M2424 349.500h54M2431 344.500h40M2451.500 329v15M2470.500 350v18.500H2489M2548 368.500h13M2561.500 349v39M2566.500 341v54M2567 349.500h18.500V329M2567 387.500h18.500V406" />
                  <path d="M2585.500 446v18.500H2567M2561.500 464v39M2566.500 457v53M2547 483.500h14M2567 502.500h18.500V538M2575 538.500h22M2575 543.500h22M2585.500 543v17" />
                  <path d="M2336 255v54" stroke-width="2" />
                </g>
                <g class="part"><circle cx="1817.500" cy="320" r="18.500" /><circle cx="1817.500" cy="483" r="18.500" /><circle cx="2354.500" cy="473" r="19" /><path d="M2351 476l3.500 9 3.500-9" /></g>
                <g class="net" shape-rendering="crispEdges">
                  <path d="M1806 176.500h23l-11.500 10zM1806 358.500h23l-11.500 11zM1806 521.500h23l-11.500 11zM2267 406.500h23l-11.500 11zM2344 512.500h22l-11.500 11zM2574 560.500h23l-11.500 11z" />
                  <path d="M2354.500 204v40M2278 281.500h40M2354.500 320V436M2278 368.500H2413M2489 368.500H2548M2585.500 406v41" />
                  <rect x="2352" y="366" width="5" height="5" fill="#00f" stroke="none" />
                </g>
                <g class="sch-text">
                  <text transform="translate(1822 279) rotate(-90)">Reset</text>
                  <text x="1846" y="315">V2</text><text x="1846" y="334">PULSE(0 5 .1p .1n .1n 10u 20u 10)</text>
                  <text transform="translate(1822 442) rotate(-90)">Shutter</text>
                  <text x="1846" y="478">V3</text><text x="1846" y="498">PULSE(0 5 10u .1n .1n 5u 20u 10)</text>
                  <text transform="translate(2360 202) rotate(-90)">POS</text>
                  <text x="2242" y="287">Reset</text><text x="2364" y="277">U2</text>
                  <text x="2282" y="378">C2</text><text x="2282" y="406">10f</text>
                  <text x="2383" y="469">I1</text><text x="2383" y="488">1n</text>
                  <text transform="translate(2456 327) rotate(-90)">Shutter</text>
                  <text transform="translate(2465 393) rotate(-90)">U3</text>
                  <text transform="translate(2591 327) rotate(-90)">POS</text>
                  <text x="2595" y="364">U1</text><text x="2595" y="478">U4</text><text x="2527" y="488">RS</text>
                  <text x="2590" y="531">C1</text><text x="2589" y="560">20p</text>
                </g>
              </svg>
              <div class="mdi-scroll">
                <button aria-label="Scroll up"><svg width="8" height="5" viewBox="0 0 8 5"><path d="M4 0l4 5H0z" /></svg></button>
                <div class="mdi-track"><div class="mdi-thumb"></div></div>
                <button aria-label="Scroll down"><svg width="8" height="5" viewBox="0 0 8 5"><path d="M4 5l4-5H0z" /></svg></button>
              </div>
            </div>
          </section>
          <section class="child">
            {@render childTitle('Pixel.raw', false)}
            <div class="child-body">
              <svg class="canvas plot" viewBox="1512 620 1840 434" preserveAspectRatio="xMinYMin slice" role="img" aria-label="Simulated waveforms">
                <g class="axis" shape-rendering="crispEdges">
                  <path d="M1553.500 638.500H3332.500V821.500H1553.500zM1553.500 842.500H3332.500V1028.500H1553.500z" />
                  {#each upperTicks as k}<path d="M1546 {k.y}h7" />{/each}
                  {#each lowerTicks as k}<path d="M1546 {k.y}h7" />{/each}
                  {#each timeTicks as k}<path d="M{k.x} 1028v7" />{/each}
                </g>
                <g class="axis-text">
                  {#each upperTicks as k}<text x="1545" y={k.y + 4.5} text-anchor="end">{k.label}</text>{/each}
                  {#each lowerTicks as k}<text x="1545" y={k.y + 4.5} text-anchor="end">{k.label}</text>{/each}
                  {#each timeTicks as k}<text x={k.x} y="1049" text-anchor="middle">{k.label}</text>{/each}
                  <text class="cyan" x="1997" y="633" text-anchor="middle">V(n001)</text>
                  <text class="magenta" x="2886" y="633" text-anchor="middle">V(n002)</text>
                  <text class="green" x="1849" y="837" text-anchor="middle">V(reset)</text>
                  <text class="blue" x="2442" y="837" text-anchor="middle">V(shutter)</text>
                  <text class="red" x="3035" y="837" text-anchor="middle">V(rs)</text>
                </g>
                <g class="traces" shape-rendering="crispEdges">
                  <path class="cyan" d={n001} /><path class="magenta" d={n002} />
                  <path class="green" d={reset} /><path class="blue" d={shutter} /><path class="red" d={rs} />
                  <path class="green" d={timeTicks.slice(0, 10).map((k, i) => `M${k.x} 842.5H${tx(i * 20 + 10)}`).join('')} />
                  <path class="blue" d={timeTicks.slice(0, 10).map((k, i) => `M${tx(i * 20 + 15.5) + 1} 1028.5H${tx(i * 20 + 18.6) - 1}`).join('')} />
                </g>
              </svg>
            </div>
          </section>
        </div>
        <footer class="statusbar"><div class="status-cell"><svg width="12" height="12" viewBox="0 0 12 12" aria-hidden="true"><path d="M0 12L12 0M4 12l8-8M8 12l4-4" stroke="#808080" stroke-width="2" /><path d="M-1 12L11 0M3 12l9-9" stroke="#fff" /></svg></div></footer>
      </div>
    </div>
  </section>
</main>

<style>
  :global(body) { background: #000; }
  button { font: inherit; color: inherit; background: none; border: 0; padding: 0; margin: 0; }
  a { color: #22229c; text-decoration: none; }
  h1, h2, h4, ul, p { margin: 0; padding: 0; font-weight: inherit; font-size: inherit; list-style: none; }
  svg { flex: none; display: block; }
  .serif { font-family: 'Liberation Serif', serif; }
  .sans { font-family: 'Liberation Sans', sans-serif; }

  .desktop { display: grid; grid-template-columns: 3fr 4fr; align-items: start; background: #000; font-family: 'Open Sans', sans-serif; font-size: 14px; }
  .display { display: flex; flex-direction: column; min-width: 0; overflow: hidden; }
  .left { aspect-ratio: 8 / 5; }
  .right { aspect-ratio: 16 / 9; }
  .panel { flex: none; height: 24px; display: flex; align-items: center; padding: 0 8px 0 6px; background: linear-gradient(#5d5b4f, #3c3b37); color: #dfdbd2; }
  .tray { margin-left: auto; display: flex; align-items: center; gap: 13px; white-space: nowrap; }
  .clock { margin-left: 4px; }
  .user { display: flex; align-items: center; gap: 5px; }
  .workspace { flex: 1; min-height: 0; display: flex; }

  .launcher { flex: none; width: 65px; padding-top: 6px; box-sizing: border-box; display: flex; flex-direction: column; align-items: center; background: linear-gradient(to right, #5a1b36, #4c1329 85%, #3d0f21); overflow: hidden; }
  .app { position: relative; flex: none; width: 52px; height: 52px; margin-bottom: 7px; border-radius: 4px; box-sizing: border-box; box-shadow: inset 0 0 0 1px rgba(255, 255, 255, .35); }
  .app:nth-child(13) { margin-bottom: 2px; }
  .right .app:nth-child(13) { margin-bottom: 7px; }
  .app.f0 { margin-bottom: 2px; }
  .app.f1 { height: 42px; margin-bottom: 0; }
  .app.f2 { height: 17px; margin-bottom: 0; }
  .app.f3 { height: 14px; margin-bottom: 0; }
  .app.f4 { height: 43px; margin-bottom: 0; }
  .glyph { width: 100%; height: 100%; }
  .plum { background: linear-gradient(#b0688a, #7b2348 40%, #7f2a50); }
  .orange { background: linear-gradient(#dd9a70, #c0602f 40%, #c66a38); }
  .silver { background: linear-gradient(#dcd9dc, #a09a9f 50%, #b4aeb3); }
  .gold { background: linear-gradient(#d3ab62, #a97d35 40%, #b98f49); }
  .blue { background: linear-gradient(#7ba6d8, #35629f 40%, #4a7fbd); }
  .lime { background: linear-gradient(#b8cf6a, #8da93a 40%, #a3b84c); }
  .azure { background: linear-gradient(#5fa9cf, #1f6c9e 40%, #4590bf); }
  .green { background: linear-gradient(#66bb55, #2d8f20 40%, #55b045); }
  .brown { background: linear-gradient(#c9835c, #8f4318 40%, #b56b3f); }
  .rust { background: linear-gradient(#c98468, #a14c2b 40%, #b4613f); }
  .moss { background: linear-gradient(#a9c464, #7a9a33 40%, #8cae45); }
  .tan { background: linear-gradient(#cf9c66, #a3662c 40%, #b87a40); }
  .red { background: linear-gradient(#d3686a, #ab2f35 40%, #b9444a); }
  .doc-writer { fill: #0f4f7a; }
  .doc-calc { fill: #17730d; }
  .doc-impress { fill: #7d3410; }
  .pip { position: absolute; left: -7px; top: 50%; margin-top: -4px; border: 4px solid transparent; border-left: 5px solid #ddd; border-right: 0; }
  .pip-back { position: absolute; right: -7px; top: 50%; margin-top: -4px; border: 4px solid transparent; border-right: 5px solid #ddd; border-left: 0; }
  .badge { position: absolute; right: 1px; top: -1px; width: 28px; height: 12px; border: 2px solid #fff; border-radius: 9px; background: #555; color: #fff; font-size: 11px; line-height: 12px; }

  .browser { flex: 1; min-width: 0; display: flex; flex-direction: column; background: #f2f1f0; }
  .tab-row { flex: none; height: 26px; box-sizing: border-box; padding: 2px 2px 0 8px; display: flex; gap: 4px; background: #2b2a27; }
  .tabs { flex: 1; display: flex; min-width: 0; }
  .tab { position: relative; flex: 1; min-width: 0; display: flex; align-items: center; padding-left: 7px; color: #3a3a38; font-size: 12px; }
  .tab-shape { position: absolute; left: -6px; top: 0; width: calc(100% + 10px); height: 24px; }
  .tab-shape path { fill: #9b9a98; stroke: #5b5a57; }
  .tab.active { z-index: 1; }
  .tab.active .tab-shape path { fill: #f2f1f0; stroke: #f2f1f0; }
  .fav { width: 16px; height: 16px; position: relative; }
  .tab-title { position: relative; flex: 1; margin-left: 4px; text-align: left; white-space: nowrap; line-height: 20px; -webkit-mask-image: linear-gradient(to right, #000 65%, rgba(0, 0, 0, .3)); mask-image: linear-gradient(to right, #000 65%, rgba(0, 0, 0, .3)); }
  .tab-close { position: relative; margin: 0 7px 0 2px; }
  .new-tab { width: 22px; height: 14px; margin-top: 5px; margin-right: 4px; background: #63625e; border: 1px solid #777; border-radius: 3px; transform: skewX(15deg); }
  .address-row { flex: none; height: 34px; display: flex; align-items: center; gap: 11px; padding: 0 12px 0 8px; }
  .nav svg { display: block; }
  .omnibox { flex: 1; min-width: 0; height: 24px; display: flex; align-items: center; gap: 6px; padding: 0 3px 0 7px; background: #fff; border: 1px solid #a8a49f; border-radius: 3px; }
  .omnibox input { flex: 1; min-width: 0; border: 0; padding: 0; outline: 0; font: 14px 'Open Sans', sans-serif; color: transparent; background: linear-gradient(to right, #333 190px, #8e8e8e 190px); -webkit-background-clip: text; background-clip: text; }
  .bookmarks { flex: none; height: 28px; padding: 0 0 1px 8px; border-bottom: 1px solid #bbb9b6; box-sizing: border-box; display: flex; align-items: center; gap: 13px; color: #333; }
  .bookmarks button { display: flex; align-items: center; gap: 4px; }

  .viewport { flex: 1; min-height: 0; display: flex; }
  .page { flex: 1; min-width: 0; display: flex; flex-direction: column; font-family: 'DejaVu Sans', sans-serif; font-size: 13px; line-height: 16px; color: #333; }
  .thread { flex: 1; min-height: 0; display: flex; overflow: hidden; background: #fff; }
  .strip { width: 15px; height: 100%; background: #f1f1f1; }
  .posts { flex: 1; min-width: 0; padding: 0 8px 0 10px; display: flex; flex-direction: column; gap: 10px; margin-top: -2px; }
  .post { flex: none; border: 1px solid #829bbd; }
  .post.first { border-top: 0; }
  .post-head { display: flex; justify-content: space-between; align-items: center; height: 23px; padding: 0 11px; background: #5c7099; color: #fff; font-size: 12px; }
  .post-head a { color: #fff; font-size: 13px; }
  .date { display: flex; align-items: center; gap: 5px; }
  .post-main { display: flex; }
  aside { flex: none; width: 200px; box-sizing: border-box; padding-top: 8px; background: #e1e4f2; text-align: center; font-size: 12px; }
  .author { display: flex; justify-content: center; align-items: center; gap: 6px; margin-bottom: 5px; }
  .status { width: 4px; height: 4px; border: 1px solid #777; border-radius: 4px; }
  .status.on { background: #9f9; border-color: #4a4; }
  .rank { font-size: 11px; }
  .content { flex: 1; min-width: 0; background: #f5f5ff; padding: 16px 0 0 11px; }
  .first .content { padding-top: 0; padding-bottom: 30px; }
  .attach { margin: 20px 40px 0 30px; padding: 14px 20px 12px; border: 1px solid #ccc; background: #e1e4f2; font-size: 12px; line-height: 18px; }
  .attach.narrow { width: 687px; max-width: 80%; }
  .attach h4, .attach li { display: flex; align-items: center; }
  .attach li { white-space: pre; }
  .attach ul + h4 { margin-top: 10px; }
  .attach h4 { margin-bottom: 4px; }
  .attach li a { font-weight: 700; text-decoration: underline; }
  .mini { width: 16px; height: 16px; margin-right: 4px; }
  .edited { display: flex; justify-content: space-between; align-items: center; margin-top: 36px; padding: 0 10px 7px 0; font-size: 11px; }
  .rep { padding: 2px 4px 3px; background: #e1e4f2; }
  .signature { margin-left: -11px; padding: 12px 11px 8px; border-top: 1px solid #829bbd; font-size: 12px; line-height: 15px; }
  .eric { font-family: 'Liberation Serif', serif; }
  .hand { font-family: 'Comic Sans MS', 'Comic Neue', 'Open Sans', sans-serif; font-size: 13px; }
  .notice { color: #00f; }
  .post footer { height: 26px; background: #e8e8e8; }
  .join { flex: none; height: 30px; display: flex; align-items: center; justify-content: center; background: #444; color: #fff; white-space: nowrap; overflow: hidden; }
  .web-scroll { flex: none; width: 15px; display: flex; flex-direction: column; box-sizing: border-box; border-left: 1px solid #999; background: #dcdbd9; }
  .web-scroll button { flex: none; height: 14px; display: grid; place-items: center; background: #fff; border: 1px solid #aaa; border-radius: 2px; }
  .web-track { flex: 1; padding-top: 140px; }
  .web-thumb { height: 208px; display: flex; flex-direction: column; align-items: center; justify-content: center; gap: 2px; background: #f7f6f5; border: 1px solid #999; border-width: 1px 0; box-sizing: border-box; }
  .web-thumb i { width: 6px; height: 1px; background: #999; }

  .ltspice { flex: 1; min-width: 0; display: flex; flex-direction: column; background: #d4d0c8; font-family: 'Liberation Sans', sans-serif; font-size: 11px; color: #000; }
  .titlebar { flex: none; height: 28px; display: flex; align-items: center; gap: 2px; padding-left: 11px; background: linear-gradient(#4b4a45, #3c3b37); border-top: 1px solid #5c5b55; box-sizing: border-box; color: #dfdbd2; font: 700 14px 'Open Sans', sans-serif; }
  .titlebar h1 { margin-left: 12px; font: inherit; }
  .wb { width: 16px; height: 16px; border-radius: 8px; background: #76756e; }
  .wb.close { background: #f06a3e; }
  .wb svg { width: 16px; height: 16px; fill: none; stroke: #33322e; stroke-width: 1.5; }
  .menubar { flex: none; height: 20px; display: flex; align-items: center; border-bottom: 1px solid #808080; }
  .menubar button { padding: 0 5px 0 6px; }
  .toolbar { flex: none; height: 29px; box-sizing: border-box; border-top: 1px solid #fff; display: flex; align-items: center; padding-left: 3px; }
  .group { display: flex; align-items: center; }
  .group::before { content: ''; width: 1px; height: 18px; border-left: 1px solid #808080; background: #fff; margin: 0 3px; }
  .group:first-child::before { margin: 0 9px 0 0; height: 22px; border-left: 1px solid #fff; background: #808080; }
  .group:last-child::after { content: ''; height: 26px; border-left: 1px solid #808080; border-right: 1px solid #fff; margin-left: 4px; }
  .group button { width: 23px; display: grid; place-items: center; }
  .tool-icon { width: 16px; height: 16px; overflow: visible; }
  .undo path { stroke: #440; fill: none; }
  .undo path + path { fill: #000; }
  .redo path { stroke: #999; fill: none; }
  .redo path + path { fill: #999; }
  .redo { transform: scaleX(-1); transform-origin: 8px 8px; }
  .doc-tabs { flex: none; height: 28px; box-sizing: border-box; padding: 0 0 6px; display: flex; align-items: flex-end; border-bottom: 1px solid #404040; background: linear-gradient(#d4d0c8 21px, #fff 21px, #fff 22px, #d4d0c8 22px); }
  .doc-tabs button { height: 18px; width: 76px; padding-left: 23px; border: solid; border-width: 1px 2px 0 0; border-color: #fff #404040; box-sizing: border-box; text-align: center; line-height: 16px; }
  .doc-tabs .current { height: 21px; width: 79px; border-left: 1px solid #fff; background: #d4d0c8; padding-left: 23px; }

  .mdi { flex: 1; min-height: 0; display: grid; grid-template-rows: 1fr 1fr; padding: 0 2px 0 1px; background: #404040; }
  .child { min-height: 0; min-width: 0; display: flex; flex-direction: column; padding: 3px; background: #d4d0c8; border: 1px solid; border-color: #d4d0c8 #404040 #404040 #d4d0c8; box-shadow: inset 1px 1px #fff, inset -1px -1px #808080; }
  .child-title { position: relative; flex: none; height: 18px; display: flex; align-items: center; padding: 0 2px; gap: 2px; background: linear-gradient(to right, #808080, #c8c8c8); color: #d4d0c8; font-weight: 700; }
  .child-title.active { background: linear-gradient(to right, #0a246a, #a6caf0); color: #fff; }
  .child-title h2 { font-size: 11px; flex: 1; }
  .child-buttons { display: flex; }
  .child-buttons button { width: 16px; height: 14px; display: grid; place-items: center; }
  .child-buttons .x { margin-left: 2px; }
  .child-buttons button, .mdi-scroll button, .mdi-thumb { background: #d4d0c8; border: 1px solid; border-color: #fff #404040 #404040 #fff; box-shadow: inset -1px -1px #808080; box-sizing: border-box; }
  .cursor { position: absolute; left: 93px; top: 5px; z-index: 2; }
  .child-body { flex: 1; min-height: 0; margin-top: 1px; display: flex; border: 2px solid; border-color: #404040 #fff #fff #404040; }
  .canvas { flex: 1; min-width: 0; width: 100%; height: 100%; overflow: hidden; }
  .schematic { background: #c0c0c0; }
  .plot { background: #000; }
  .part { fill: none; stroke: #000080; }
  .net { fill: none; stroke: #0000ff; }
  .sch-text { font: 700 13px 'Liberation Sans', sans-serif; fill: #000; }
  .axis { fill: none; stroke: #989898; }
  .axis-text { font: 700 13px 'Liberation Sans', sans-serif; fill: #989898; }
  .traces { fill: none; }
  .traces .cyan { stroke: #00b0b0; }
  .traces .magenta { stroke: #f0f; }
  .traces .green { stroke: #0f0; }
  .traces .blue { stroke: #00f; }
  .traces .red { stroke: #f00; }
  .axis-text .cyan { fill: #00b0b0; }
  .axis-text .magenta { fill: #f0f; }
  .axis-text .green { fill: #0f0; }
  .axis-text .blue { fill: #00f; }
  .axis-text .red { fill: #f00; }
  .mdi-scroll { flex: none; width: 16px; display: flex; flex-direction: column; background: #e9e7e3; }
  .mdi-scroll button { flex: none; height: 16px; display: grid; place-items: center; }
  .mdi-track { flex: 1; padding-top: 58px; }
  .mdi-thumb { height: 238px; }
  .statusbar { flex: none; height: 20px; box-sizing: border-box; border-top: 1px solid #fff; display: flex; justify-content: flex-end; padding-top: 3px; }
  .status-cell { width: 51px; box-sizing: border-box; border: solid #808080; border-width: 1px 0 0 1px; display: flex; justify-content: flex-end; align-items: flex-end; }
</style>
